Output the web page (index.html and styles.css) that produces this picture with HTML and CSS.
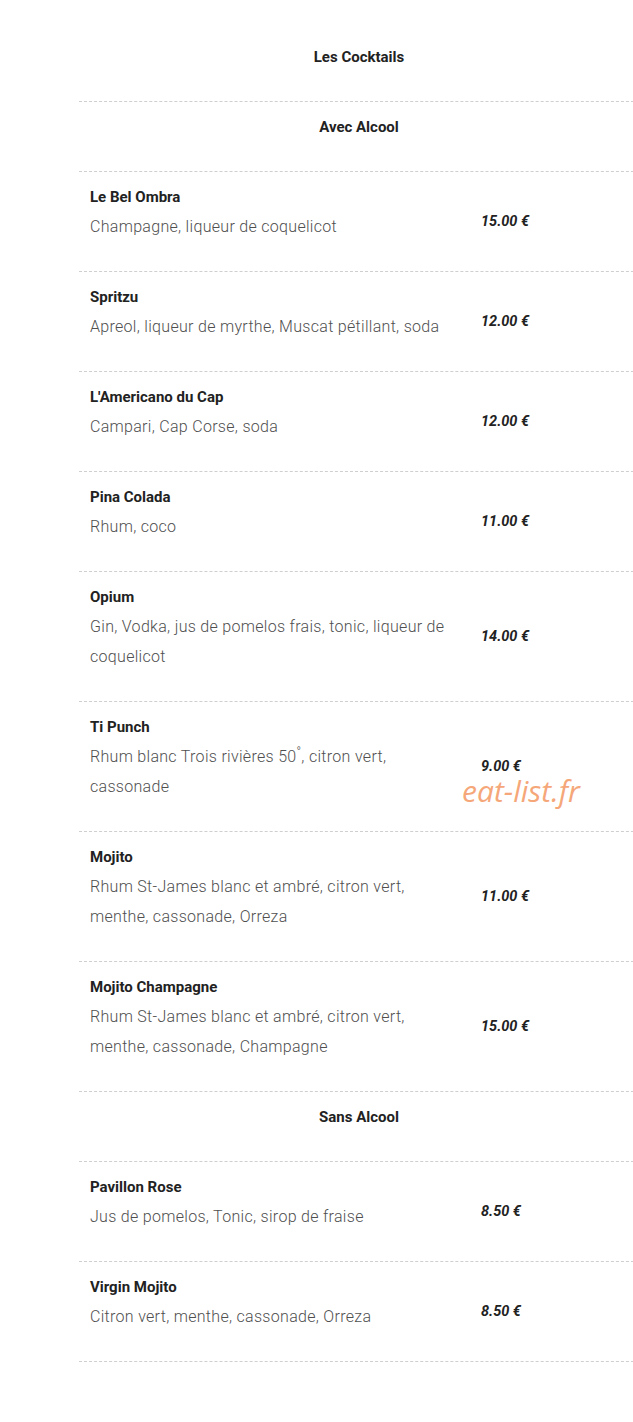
FILE: index.html
```html
<!DOCTYPE html>
<html lang="fr">
<head>
<meta charset="utf-8">
<meta name="viewport" content="width=device-width, initial-scale=1.0">
<title>Les Cocktails</title>
<link rel="stylesheet" href="styles.css">
</head>
<body>
<div class="menu">
    <div class="menu-title">Les Cocktails</div>

    <div class="menu-row section">Avec Alcool</div>

    <div class="menu-row item">
        <div class="item-text">
            <div class="item-name">Le Bel Ombra</div>
            <div class="item-desc">Champagne, liqueur de coquelicot</div>
        </div>
        <div class="item-price">15.00 €</div>
    </div>
    <div class="menu-row item">
        <div class="item-text">
            <div class="item-name">Spritzu</div>
            <div class="item-desc">Apreol, liqueur de myrthe, Muscat pétillant, soda</div>
        </div>
        <div class="item-price">12.00 €</div>
    </div>
    <div class="menu-row item">
        <div class="item-text">
            <div class="item-name">L'Americano du Cap</div>
            <div class="item-desc">Campari, Cap Corse, soda</div>
        </div>
        <div class="item-price">12.00 €</div>
    </div>
    <div class="menu-row item">
        <div class="item-text">
            <div class="item-name">Pina Colada</div>
            <div class="item-desc">Rhum, coco</div>
        </div>
        <div class="item-price">11.00 €</div>
    </div>
    <div class="menu-row item">
        <div class="item-text">
            <div class="item-name">Opium</div>
            <div class="item-desc">Gin, Vodka, jus de pomelos frais, tonic, liqueur de coquelicot</div>
        </div>
        <div class="item-price">14.00 €</div>
    </div>
    <div class="menu-row item">
        <div class="item-text">
            <div class="item-name">Ti Punch</div>
            <div class="item-desc">Rhum blanc Trois rivières 50<sup>°</sup>, citron vert, cassonade</div>
        </div>
        <div class="item-price">9.00 €</div>
    </div>
    <div class="menu-row item">
        <div class="item-text">
            <div class="item-name">Mojito</div>
            <div class="item-desc">Rhum St-James blanc et ambré, citron vert, menthe, cassonade, Orreza</div>
        </div>
        <div class="item-price">11.00 €</div>
    </div>
    <div class="menu-row item">
        <div class="item-text">
            <div class="item-name">Mojito Champagne</div>
            <div class="item-desc">Rhum St-James blanc et ambré, citron vert, menthe, cassonade, Champagne</div>
        </div>
        <div class="item-price">15.00 €</div>
    </div>

    <div class="menu-row section">Sans Alcool</div>

    <div class="menu-row item">
        <div class="item-text">
            <div class="item-name">Pavillon Rose</div>
            <div class="item-desc">Jus de pomelos, Tonic, sirop de fraise</div>
        </div>
        <div class="item-price">8.50 €</div>
    </div>
    <div class="menu-row item last">
        <div class="item-text">
            <div class="item-name">Virgin Mojito</div>
            <div class="item-desc">Citron vert, menthe, cassonade, Orreza</div>
        </div>
        <div class="item-price">8.50 €</div>
    </div>

    <div class="watermark">eat-list.fr</div>
</div>
</body>
</html>
```

FILE: styles.css
```css
*{margin:0;padding:0;box-sizing:border-box}
body{background:#fff;font-family:"Roboto","Liberation Sans",sans-serif;color:#222;overflow-x:hidden}
.menu{position:relative;margin-left:79px;width:560px;padding-top:31px}
.menu-title{text-align:center;font-weight:700;font-size:15px;line-height:30px;padding:11px 0 29px}
.menu-row{border-top:1px dashed #cfcfcf}
.menu-row.last{border-bottom:1px dashed #cfcfcf}
.section{text-align:center;font-weight:700;font-size:15px;line-height:30px;padding:10px 0 29px}
.item{display:flex;align-items:center}
.item-text{width:391px;padding:10px 11px 29px}
.item-name{font-weight:700;font-size:15px;line-height:30px}
.item-desc{font-size:16px;line-height:30px;color:#4f4f4f;font-weight:300;letter-spacing:0.3px}
.item-desc sup{font-size:12px;line-height:0;vertical-align:6px}
.item-price{padding-left:11px;font-weight:700;font-style:italic;font-size:14.5px}
.watermark{position:absolute;left:383px;top:770px;font-family:"Open Sans",sans-serif;font-style:italic;font-size:30px;color:#f5a77a}
```
